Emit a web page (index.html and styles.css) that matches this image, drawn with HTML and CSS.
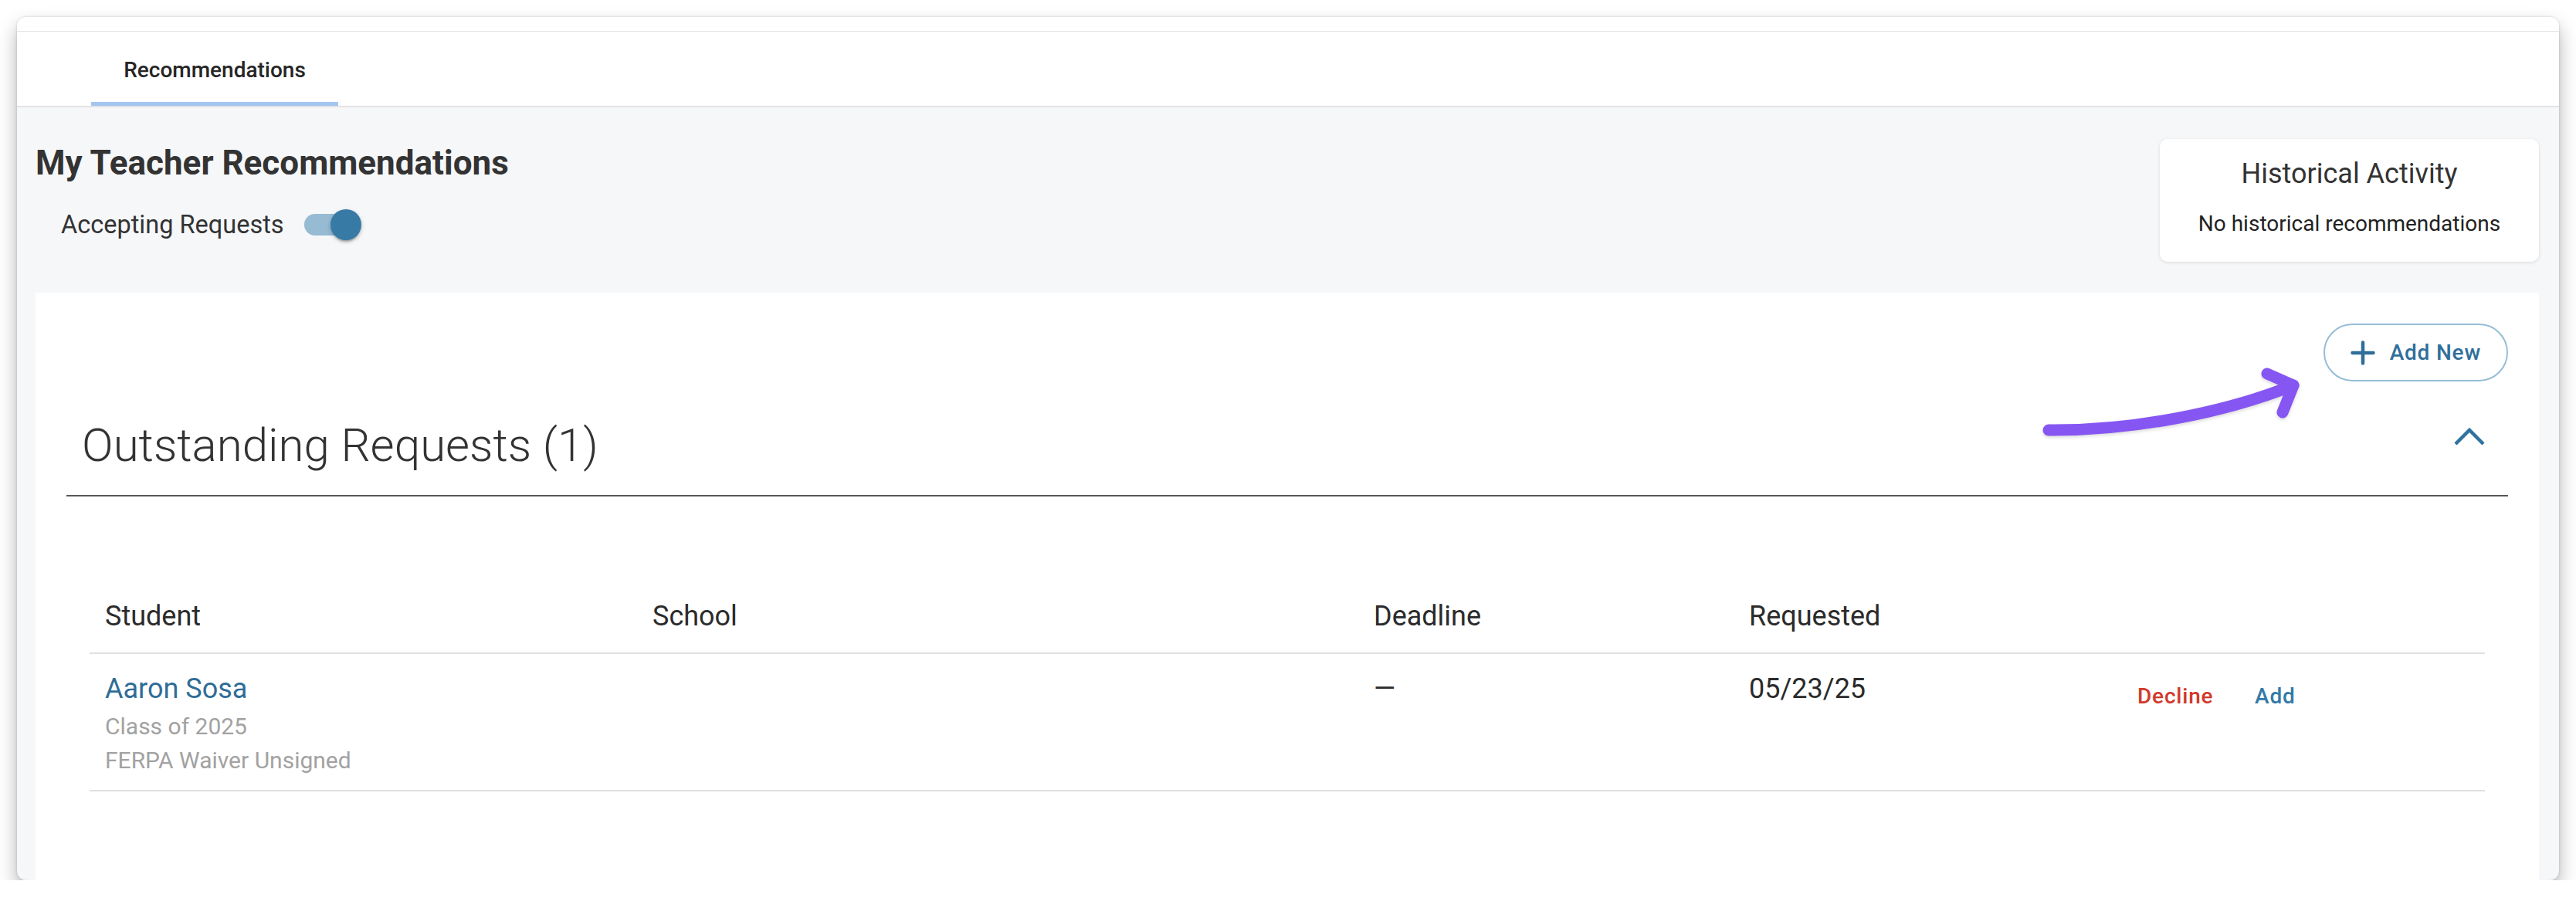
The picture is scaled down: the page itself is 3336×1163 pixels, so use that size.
FILE: index.html
```html
<!DOCTYPE html>
<html lang="en">
<head>
  <meta charset="UTF-8">
  <title>Recommendations</title>
  <link rel="stylesheet" href="styles.css">
</head>
<body>

<div class="window">
  <div class="topstrip"></div>

  <nav class="tabs">
    <a class="tab active" href="#">Recommendations</a>
  </nav>

  <main class="content">
    <div class="page-head">
      <div>
        <h1>My Teacher Recommendations</h1>
        <label class="toggle-row">
          <span>Accepting Requests</span>
          <span class="switch">
            <span class="track"></span>
            <span class="thumb"></span>
          </span>
        </label>
      </div>

      <div class="history">
        <h3>Historical Activity</h3>
        <p>No historical recommendations</p>
      </div>
    </div>

    <section class="panel">
      <div class="panel-actions">
        <button class="add-new">
          <svg width="32" height="32" viewBox="0 0 32 32">
            <path d="M2.5 16H29.5M16 2.5V29.5" stroke="currentColor" stroke-width="4.5" stroke-linecap="round" fill="none"/>
          </svg>
          Add New
        </button>
      </div>

      <div class="section-head">
        <h2>Outstanding Requests (1)</h2>
        <svg class="chevron" width="40" height="24" viewBox="0 0 40 24">
          <polyline points="2,22 20,4 38,22" stroke="currentColor" stroke-width="4.5" fill="none"/>
        </svg>
      </div>

      <table class="requests">
        <colgroup>
          <col style="width: 709px">
          <col style="width: 934px">
          <col style="width: 486px">
          <col style="width: 487px">
          <col>
        </colgroup>
        <thead>
          <tr>
            <th>Student</th>
            <th>School</th>
            <th>Deadline</th>
            <th>Requested</th>
            <th></th>
          </tr>
        </thead>
        <tbody>
          <tr>
            <td>
              <a class="student-name" href="#">Aaron Sosa</a>
              <span class="meta">Class of 2025</span>
              <span class="meta">FERPA Waiver Unsigned</span>
            </td>
            <td></td>
            <td>—</td>
            <td>05/23/25</td>
            <td>
              <div class="actions">
                <button class="text-btn decline">Decline</button>
                <button class="text-btn add">Add</button>
              </div>
            </td>
          </tr>
        </tbody>
      </table>

      <!-- hand-drawn pointer to the Add New button -->
      <svg class="pointer" width="420" height="120" viewBox="0 0 420 120">
        <path d="M53 97 C160 98 280 75 370 39" />
        <path d="M336 24 L370 39 L356 74" />
      </svg>
    </section>
  </main>
</div>

</body>
</html>
```

FILE: styles.css
```css
* {
  box-sizing: border-box;
}

html,
body {
  margin: 0;
  overflow: hidden;
}

body {
  background: #fff;
  font-family: Roboto, "Liberation Sans", sans-serif;
  color: #333;
}

.window {
  height: 1118px;
  margin: 22px 22px 0;
  border-radius: 12px;
  overflow: hidden;
  background: #f6f7f9;
  box-shadow: 0 12px 24px rgba(0, 0, 0, 0.3), 0 0 3px rgba(0, 0, 0, 0.18);
  display: flex;
  flex-direction: column;
}

.topstrip {
  height: 19px;
  background: #fff;
  border-bottom: 1px solid #e3e3e3;
}

.tabs {
  display: flex;
  height: 98px;
  padding-left: 96px;
  background: #fff;
  border-bottom: 2px solid #e3e3e3;
}

.tab {
  width: 320px;
  display: flex;
  align-items: center;
  justify-content: center;
  padding-top: 3px;
  font-size: 28px;
  font-weight: 500;
  color: #262626;
  text-decoration: none;
}

.tab.active {
  box-shadow: inset 0 -5px #a3c6f0;
}

.content {
  flex: 1;
  min-height: 0;
  display: flex;
  flex-direction: column;
  padding: 41px 26px 0 24px;
}

.page-head {
  display: flex;
  justify-content: space-between;
  align-items: flex-start;
  margin-bottom: 40px;
}

h1 {
  margin: 5px 0 0;
  font-size: 44px;
  line-height: 1.2;
  font-weight: 700;
  color: #333;
}

.toggle-row {
  display: flex;
  align-items: center;
  margin: 15px 0 0 33px;
  font-size: 32.5px;
  line-height: 48px;
  color: #333;
}

.switch {
  position: relative;
  width: 116px;
  height: 76px;
  padding: 24px;
  margin-left: 2px;
}

.track {
  display: block;
  width: 68px;
  height: 28px;
  border-radius: 14px;
  background: #96bbd3;
}

.thumb {
  position: absolute;
  left: 58px;
  top: 18px;
  width: 40px;
  height: 40px;
  border-radius: 50%;
  background: #377aa6;
  box-shadow: 0 4px 2px -2px rgba(0, 0, 0, 0.2), 0 2px 4px rgba(0, 0, 0, 0.14), 0 2px 6px rgba(0, 0, 0, 0.12);
}

.history {
  width: 491px;
  height: 159px;
  padding-top: 24px;
  background: #fff;
  border-radius: 10px;
  box-shadow: 0 1px 4px rgba(0, 0, 0, 0.12);
  text-align: center;
}

.history h3 {
  margin: 0;
  font-size: 36px;
  line-height: 1.2;
  font-weight: 400;
  color: #333;
}

.history p {
  margin: 22px 0 0;
  font-size: 28px;
  line-height: 42px;
  color: #222;
}

.panel {
  position: relative;
  flex: 1;
  padding: 40px 40px 0;
  background: #fff;
}

.panel-actions {
  display: flex;
  justify-content: flex-end;
}

.add-new {
  display: inline-flex;
  align-items: center;
  gap: 19px;
  height: 75px;
  padding: 0 33px;
  border: 2px solid #97bdd6;
  border-radius: 38px;
  background: #fff;
  color: #2f6f9b;
  font-family: inherit;
  font-size: 28px;
  font-weight: 500;
  letter-spacing: 0.8px;
  cursor: pointer;
}

.section-head {
  display: flex;
  justify-content: space-between;
  align-items: flex-start;
  margin-top: 47px;
  padding: 0 30px 28px 20px;
  border-bottom: 2px solid #575757;
}

.section-head h2 {
  margin: 0;
  font-size: 60px;
  line-height: 72px;
  font-weight: 300;
  color: #333;
}

.chevron {
  margin-top: 12px;
  color: #2f72a0;
}

.requests {
  width: calc(100% - 60px);
  margin: 112px 30px 0;
  border-collapse: collapse;
  table-layout: fixed;
}

.requests th {
  padding: 16px 20px 20px;
  text-align: left;
  font-size: 36px;
  line-height: 54px;
  font-weight: 400;
  color: #2b2b2b;
  border-bottom: 2px solid #e0e0e0;
}

.requests td {
  padding: 18px 20px 16px;
  vertical-align: top;
  font-size: 36px;
  line-height: 54px;
  color: #2b2b2b;
  border-bottom: 2px solid #e0e0e0;
}

.student-name {
  display: block;
  color: #2f6d97;
  text-decoration: none;
}

.meta {
  display: block;
  font-size: 30px;
  line-height: 44px;
  color: #a2a2a2;
}

.actions {
  display: flex;
}

.text-btn {
  min-width: 128px;
  padding: 12px 16px;
  border: none;
  background: none;
  font-family: inherit;
  font-size: 28px;
  line-height: 49px;
  font-weight: 500;
  letter-spacing: 0.02857em;
  cursor: pointer;
}

.text-btn.decline {
  color: #d2392b;
}

.text-btn.add {
  color: #327aa8;
}

.pointer {
  position: absolute;
  left: 2554px;
  top: 81px;
  overflow: visible;
  filter: drop-shadow(0 2px 2px rgba(0, 0, 0, 0.15));
}

.pointer path {
  fill: none;
  stroke: #8656f3;
  stroke-width: 15;
  stroke-linecap: round;
  stroke-linejoin: round;
}
```
